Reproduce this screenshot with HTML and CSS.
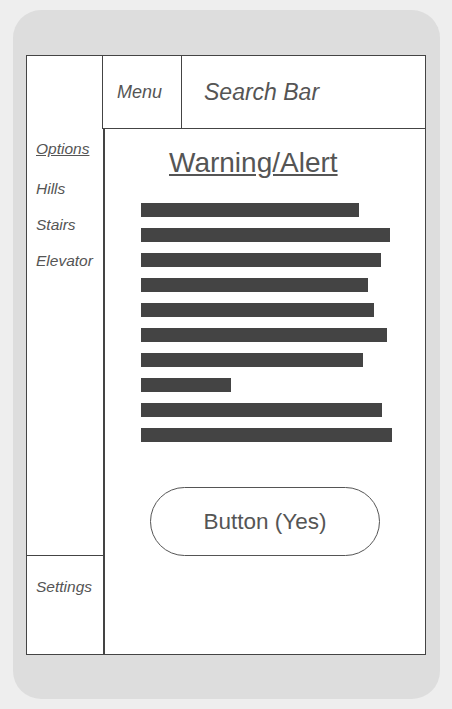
FILE: index.html
```html
<!DOCTYPE html>
<html>
<head>
<meta charset="utf-8">
<link rel="stylesheet" href="styles.css">
</head>
<body>
<div class="phone">
  <div class="screen">
    <div class="corner"></div>
    <div class="header">
      <div class="menu">Menu</div>
      <div class="search">Search Bar</div>
    </div>
    <div class="sidebar">
      <div class="nav">
        <div class="nav-title">Options</div>
        <div class="nav-item">Hills</div>
        <div class="nav-item">Stairs</div>
        <div class="nav-item">Elevator</div>
      </div>
      <div class="settings">Settings</div>
    </div>
    <div class="main">
      <div class="title">Warning/Alert</div>
      <div class="bars">
        <div class="bar" style="width:218px"></div>
        <div class="bar" style="width:249px"></div>
        <div class="bar" style="width:240px"></div>
        <div class="bar" style="width:227px"></div>
        <div class="bar" style="width:233px"></div>
        <div class="bar" style="width:246px"></div>
        <div class="bar" style="width:222px"></div>
        <div class="bar" style="width:90px"></div>
        <div class="bar" style="width:241px"></div>
        <div class="bar" style="width:251px"></div>
      </div>
      <div class="button">Button (Yes)</div>
    </div>
  </div>
</div>
</body>
</html>
```

FILE: styles.css
```css
html, body {
  margin: 0;
  padding: 0;
  background: #eeeeee;
}
body {
  font-family: "Liberation Sans", Arial, sans-serif;
  color: #555555;
  width: 452px;
  height: 709px;
  overflow: hidden;
}
.phone {
  box-sizing: border-box;
  margin: 10px 0 0 13px;
  width: 427px;
  height: 689px;
  background: #dddddd;
  border-radius: 28px;
  padding: 45px 14px 44px 13px;
}
.screen {
  box-sizing: border-box;
  width: 400px;
  height: 600px;
  background: #ffffff;
  border: 1px solid #444444;
  display: grid;
  grid-template-columns: 75px 1fr;
  grid-template-rows: 73px 1fr;
}
.header {
  display: flex;
  border-left: 1px solid #444444;
  border-bottom: 1px solid #444444;
}
.menu {
  box-sizing: border-box;
  width: 79px;
  border-right: 1px solid #444444;
  display: flex;
  align-items: center;
  padding: 1px 0 0 14px;
  font-style: italic;
  font-size: 18px;
}
.search {
  flex: 1;
  display: flex;
  align-items: center;
  padding-left: 22px;
  font-style: italic;
  font-size: 23px;
}
.sidebar {
  display: flex;
  flex-direction: column;
  width: 76px;
}
.nav {
  flex: 1;
  padding: 10px 0 0 9px;
  font-style: italic;
  font-size: 15.5px;
  line-height: 20px;
}
.nav-title {
  text-decoration: underline;
  margin-bottom: 20px;
}
.nav-item {
  margin-bottom: 16px;
}
.settings {
  box-sizing: border-box;
  height: 99px;
  border-top: 1px solid #444444;
  padding: 20px 0 0 9px;
  font-style: italic;
  font-size: 15.5px;
  line-height: 21px;
}
.main {
  margin-left: 1px;
  border-left: 2px solid #444444;
  display: flex;
  flex-direction: column;
}
.title {
  padding: 17px 0 0 64px;
  font-size: 28px;
  line-height: 34px;
  text-decoration: underline;
}
.bars {
  margin: 23px 0 0 36px;
  display: flex;
  flex-direction: column;
  gap: 11px;
}
.bar {
  height: 14px;
  background: #444444;
}
.button {
  box-sizing: border-box;
  margin: 45px auto 0;
  width: 230px;
  height: 69px;
  border: 1px solid #555555;
  border-radius: 35px;
  display: flex;
  align-items: center;
  justify-content: center;
  font-size: 22.5px;
}
```
